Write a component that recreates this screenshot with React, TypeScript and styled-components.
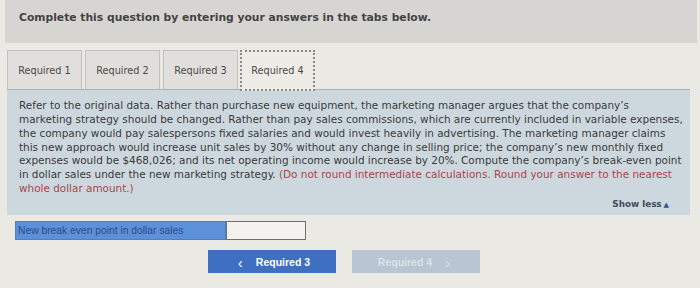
import React from "react";
import styled, { createGlobalStyle } from "styled-components";

const tabs = ["Required 1", "Required 2", "Required 3", "Required 4"];

const App: React.FC = () => {
  return (
    <>
      <GlobalStyle />
      <Page>
        <Header>Complete this question by entering your answers in the tabs below.</Header>
        <TabRow>
          {tabs.map((t, i) => (
            <Tab key={t} $active={i === 3}>
              {t}
            </Tab>
          ))}
        </TabRow>
        <Panel>
          <Question>
            Refer to the original data. Rather than purchase new equipment, the marketing manager argues that the
            company’s
            <br />
            marketing strategy should be changed. Rather than pay sales commissions, which are currently included in
            variable expenses,
            <br />
            the company would pay salespersons fixed salaries and would invest heavily in advertising. The marketing
            manager claims
            <br />
            this new approach would increase unit sales by 30% without any change in selling price; the company’s new
            monthly fixed
            <br />
            expenses would be $468,026; and its net operating income would increase by 20%. Compute the company’s
            break-even point
            <br />
            in dollar sales under the new marketing strategy.{" "}
            <Note>
              (Do not round intermediate calculations. Round your answer to the nearest
              <br />
              whole dollar amount.)
            </Note>
          </Question>
          <ShowLess>
            Show less<Arrow>▲</Arrow>
          </ShowLess>
        </Panel>
        <AnswerRow>
          <AnswerLabel>New break even point in dollar sales</AnswerLabel>
          <AnswerInput />
        </AnswerRow>
        <NavRow>
          <NavButton $disabled={false}>
            <Chevron>‹</Chevron>Required 3
          </NavButton>
          <NavButton $disabled>
            Required 4<Chevron>›</Chevron>
          </NavButton>
        </NavRow>
      </Page>
    </>
  );
};

// Styled Components
const GlobalStyle = createGlobalStyle`
  html, body {
    margin: 0;
    padding: 0;
    background: #ebe9e3;
  }
`;

const Page = styled.div`
  width: 700px;
  height: 288px;
  overflow: hidden;
  font-family: "DejaVu Sans", Verdana, sans-serif;
  color: #3b3b3b;
`;

const Header = styled.div`
  margin: 0 3px 0 5px;
  height: 43px;
  background: #d6d5d1;
  padding: 11px 0 0 14px;
  box-sizing: border-box;
  font-size: 10.75px;
  font-weight: bold;
  color: #444;
`;

const TabRow = styled.div`
  display: flex;
  gap: 3px;
  margin-top: 7px;
  padding-left: 7px;
  position: relative;
  z-index: 1;
`;

const Tab = styled.div<{ $active: boolean }>`
  width: 75px;
  height: ${(p) => (p.$active ? "41px" : "39px")};
  box-sizing: border-box;
  display: flex;
  align-items: center;
  justify-content: center;
  font-size: 9.7px;
  color: #4a4a4a;
  background: ${(p) => (p.$active ? "#eeece7" : "#e1dfdb")};
  border: ${(p) => (p.$active ? "2px dotted #8a8a8a" : "1px solid #c3c1bd")};
  border-bottom: ${(p) => (p.$active ? "2px dotted #8a8a8a" : "none")};
  margin-left: ${(p) => (p.$active ? "-1px" : "0")};
  margin-bottom: ${(p) => (p.$active ? "-2px" : "0")};
`;

const Panel = styled.div`
  margin: 0 10px 0 7px;
  height: 126px;
  box-sizing: border-box;
  background: #cdd8de;
  border-top: 1px solid #aab2b6;
  padding: 9px 0 0 12px;
  display: flex;
  flex-direction: column;
`;

const Question = styled.p`
  margin: 0;
  font-size: 10.45px;
  line-height: 13.85px;
  color: #3a3a3a;
  white-space: nowrap;
`;

const Note = styled.span`
  color: #a8464c;
`;

const ShowLess = styled.div`
  align-self: flex-end;
  margin: 3px 21px 0 0;
  font-size: 8.8px;
  font-weight: bold;
  color: #3f4b59;
`;

const Arrow = styled.span`
  font-size: 7px;
  margin-left: 2px;
  color: #2f4f8f;
`;

const AnswerRow = styled.div`
  display: flex;
  margin: 6px 0 0 15px;
  height: 19px;
`;

const AnswerLabel = styled.div`
  width: 211px;
  box-sizing: border-box;
  background: #5c90d8;
  border: 1px solid #4d7fc6;
  padding: 0 2px;
  display: flex;
  align-items: center;
  font-family: "Liberation Sans", Arial, sans-serif;
  font-size: 10.3px;
  color: #2b4c8c;
`;

const AnswerInput = styled.div`
  width: 80px;
  box-sizing: border-box;
  background: #f3f2ee;
  border: 1px solid #6f6f6f;
`;

const NavRow = styled.div`
  display: flex;
  justify-content: center;
  gap: 16px;
  margin-top: 10px;
  padding-right: 12px;
`;

const NavButton = styled.div<{ $disabled: boolean }>`
  width: 128px;
  height: 23px;
  display: flex;
  align-items: center;
  justify-content: center;
  gap: 9px;
  font-family: "Liberation Sans", Arial, sans-serif;
  font-size: 10.5px;
  font-weight: bold;
  background: ${(p) => (p.$disabled ? "#b8c5d2" : "#3e6fc0")};
  color: ${(p) => (p.$disabled ? "#dce3ea" : "#ffffff")};
`;

const Chevron = styled.span`
  font-size: 15px;
  font-weight: normal;
  line-height: 1;
  margin: 0 4px -1px;
`;

export default App;
